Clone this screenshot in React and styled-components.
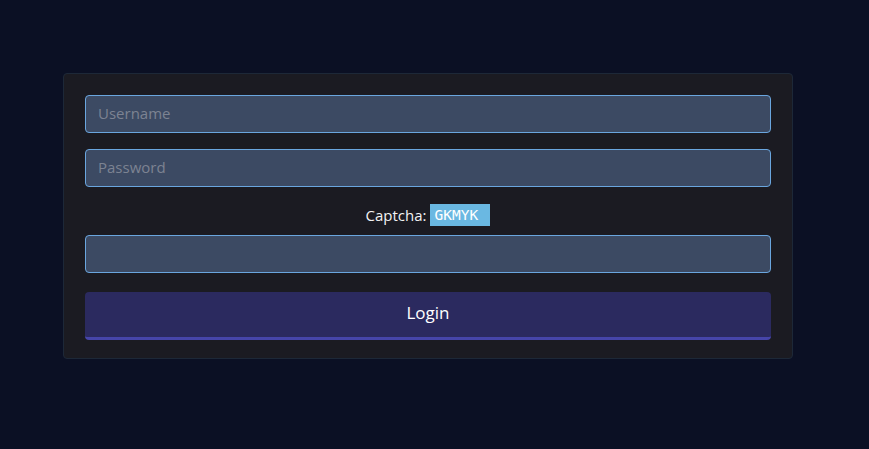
import React from 'react';
import styled, { createGlobalStyle } from 'styled-components';

const GlobalStyle = createGlobalStyle`
  html, body {
    margin: 0;
    background: #0b1024;
    font-family: "Open Sans", "Noto Sans", sans-serif;
  }
`;

const Page = styled.div`
  min-height: 449px;
  padding-top: 73px;
  box-sizing: border-box;
`;

const Card = styled.form`
  width: 730px;
  margin-left: 63px;
  box-sizing: border-box;
  padding: 21px 21px 18px;
  background: #1b1b22;
  border: 1px solid #1d2838;
  border-radius: 4px;
  display: flex;
  flex-direction: column;
`;

const Input = styled.input`
  height: 38px;
  box-sizing: border-box;
  padding: 0 12px 3px;
  background: #3c4a63;
  border: 1px solid #6aa6df;
  border-radius: 4px;
  color: #e6e9ef;
  font-family: inherit;
  font-size: 15px;
  margin-bottom: ${(p) => p.$gap || 16}px;
  outline: none;

  &::placeholder {
    color: #7c8392;
  }
`;

const CaptchaRow = styled.div`
  height: 22px;
  display: flex;
  align-items: center;
  justify-content: center;
  gap: 4px;
  margin: 0 0 9px;
  color: #f2f2f2;
  font-size: 15px;
`;

const CaptchaCode = styled.span`
  width: 60px;
  height: 22px;
  box-sizing: border-box;
  padding-left: 4px;
  background: #6ab8e2;
  color: #ffffff;
  font-family: "DejaVu Sans Mono", monospace;
  font-size: 14.5px;
  line-height: 22px;
`;

const Button = styled.button`
  height: 48px;
  margin-top: 3px;
  padding-bottom: 5px;
  background: #2b2a5f;
  border: none;
  border-bottom: 3px solid #4645a9;
  border-radius: 4px;
  color: #ffffff;
  font-family: inherit;
  font-size: 17px;
  cursor: pointer;
`;

export default function App() {
  return (
    <>
      <GlobalStyle />
      <Page>
        <Card onSubmit={(e) => e.preventDefault()}>
          <Input placeholder="Username" />
          <Input type="password" placeholder="Password" $gap={17} />
          <CaptchaRow>
            Captcha: <CaptchaCode>GKMYK</CaptchaCode>
          </CaptchaRow>
          <Input $gap={16} />
          <Button type="submit">Login</Button>
        </Card>
      </Page>
    </>
  );
}
